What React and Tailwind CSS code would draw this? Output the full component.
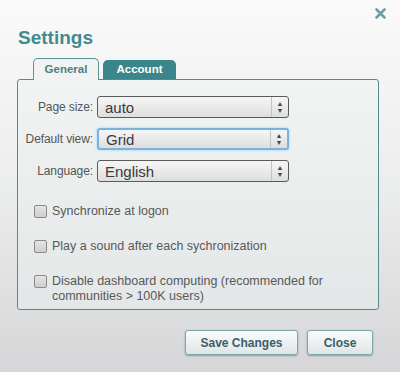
import React, { useState } from 'react';

const font = { fontFamily: '"Liberation Sans", Arial, sans-serif' };

const SelectBox = ({ value, focused }) => (
  <div
    className={`flex h-[22px] w-[192px] items-stretch rounded-[3px] bg-gradient-to-b from-[#f6f6f6] to-[#dedede] ${
      focused
        ? 'border-2 border-[#74b4de] shadow-[0_0_3px_#9fd0ee]'
        : 'border border-[#5a5a5a]'
    }`}
  >
    <div className="flex flex-1 items-center pl-[7px] text-[15px] leading-none text-[#3a3a3a]">{value}</div>
    <div className="flex w-[17px] flex-col items-center justify-center border-l border-[#c4c4c4] text-[7px] leading-[7px] text-[#444]">
      <span>▲</span>
      <span>▼</span>
    </div>
  </div>
);

const Check = ({ children }) => (
  <div className="flex items-start gap-[5px]">
    <div className="mt-[1px] h-[13px] w-[13px] shrink-0 rounded-[2px] border border-[#8a8a8a] bg-gradient-to-b from-[#e4e4e4] to-[#cfcfcf]" />
    <div className="text-[12.5px] leading-[15px] text-[#585858]">{children}</div>
  </div>
);

export default function App() {
  const [tab, setTab] = useState('general');

  const rows = [
    { label: 'Page size:', value: 'auto' },
    { label: 'Default view:', value: 'Grid', focused: true },
    { label: 'Language:', value: 'English' }
  ];

  return (
    <div style={font} className="flex h-[372px] w-[400px] flex-col bg-gradient-to-b from-[#fafafa] via-[#eceded] to-[#d6d6d8]">
      {/* Close */}
      <div className="flex justify-end pr-[14px] pt-[8px]">
        <svg width="11" height="11" viewBox="0 0 11 11">
          <path d="M1.5 1.5 L9.5 9.5 M9.5 1.5 L1.5 9.5" stroke="#6f9ea9" strokeWidth="2.6" strokeLinecap="round" />
        </svg>
      </div>

      <h1 className="ml-[18px] mt-[8px] text-[19px] font-bold leading-[22px] text-[#3f8b90]">Settings</h1>

      {/* Tabs */}
      <div className="ml-[33px] mt-[9px] flex items-end gap-[4px]">
        <button
          onClick={() => setTab('general')}
          className="relative -mb-px h-[22px] w-[66px] rounded-t-[5px] border border-b-0 border-[#5a9498] bg-[#f1f3f3] text-[11.5px] font-bold text-[#4e7f86]"
        >
          General
        </button>
        <button
          onClick={() => setTab('account')}
          className="h-[19px] w-[73px] rounded-t-[5px] bg-[#3a868b] text-[11.5px] font-bold text-white"
        >
          Account
        </button>
      </div>

      {/* Panel */}
      <div className="ml-[17px] h-[231px] w-[362px] rounded-[3px] border border-[#4f8b8f] bg-gradient-to-b from-[#f2f4f4] to-[#e4e7e7] pt-[16px]">
        <div className="flex flex-col gap-[10px]">
          {rows.map((r) => (
            <div key={r.label} className="flex items-center">
              <div className="w-[79px] pr-[4px] text-right text-[12px] tracking-[-0.1px] text-[#555]">{r.label}</div>
              <SelectBox value={r.value} focused={r.focused} />
            </div>
          ))}
        </div>

        <div className="ml-[16px] mt-[22px] flex flex-col gap-[20px]">
          <Check>Synchronize at logon</Check>
          <Check>Play a sound after each sychronization</Check>
          <Check>
            Disable dashboard computing (recommended for
            <br />
            communities &gt; 100K users)
          </Check>
        </div>
      </div>

      {/* Buttons */}
      <div className="mt-[20px] flex justify-end gap-[9px] pr-[27px]">
        <button className="h-[25px] w-[113px] rounded-[3px] border border-[#7fa6ab] bg-gradient-to-b from-[#fbfcfc] to-[#dfe5e6] text-[12px] font-bold text-[#3b5e6a] shadow-[0_1px_2px_rgba(60,100,110,0.5)]">
          Save Changes
        </button>
        <button className="h-[25px] w-[66px] rounded-[3px] border border-[#7fa6ab] bg-gradient-to-b from-[#fbfcfc] to-[#dfe5e6] text-[12px] font-bold text-[#3b5e6a] shadow-[0_1px_2px_rgba(60,100,110,0.5)]">
          Close
        </button>
      </div>
    </div>
  );
}
